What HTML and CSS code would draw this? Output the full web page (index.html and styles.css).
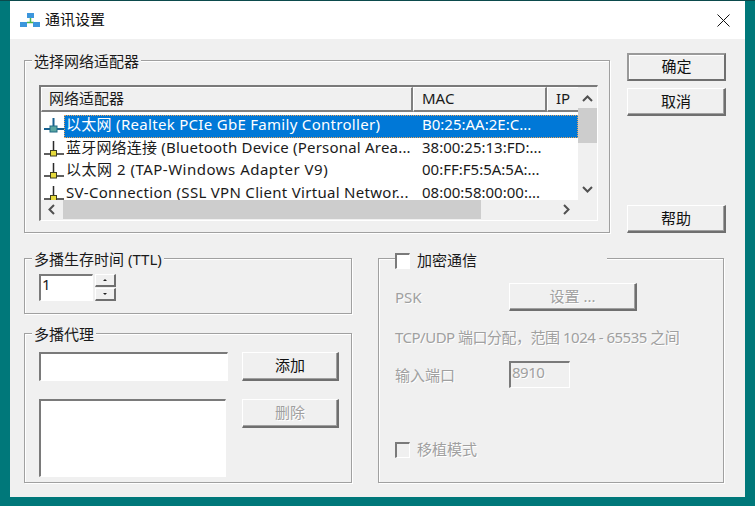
FILE: index.html
```html
<!DOCTYPE html>
<html lang="zh-CN">
<head>
<meta charset="utf-8">
<title>通讯设置</title>
<link rel="stylesheet" href="styles.css">
</head>
<body>
<svg class="defs" width="0" height="0">
  <symbol id="adapter" viewBox="0 0 20 16">
    <path d="M9.500 0v13M0 13h20" stroke="#2b2b2b" stroke-width="1.500" fill="none"/>
    <rect x="6.500" y="9.500" width="6" height="5.500" fill="#e6da3c" stroke="#3f3f20"/>
  </symbol>
  <symbol id="adapter-sel" viewBox="0 0 20 16">
    <path d="M9.500 0v13M0 11h20" stroke="#17608f" stroke-width="2" fill="none"/>
    <rect x="6" y="8" width="7" height="6" fill="#5aa6a0" stroke="#1f6a86"/>
  </symbol>
</svg>
<main class="window">
  <header class="titlebar">
    <svg class="title-icon" width="20" height="14" viewBox="0 0 20 14">
      <rect x="7" y="0" width="7" height="5" fill="#3c96dc"/>
      <path d="M10.500 5v4M7 9.500h7" stroke="#4fb848" stroke-width="1.500" fill="none"/>
      <rect x="0" y="9" width="7" height="5" fill="#3c96dc"/>
      <rect x="13" y="9" width="7" height="5" fill="#3c96dc"/>
    </svg>
    <span class="title-text">通讯设置</span>
    <svg class="close" width="13" height="13" viewBox="0 0 13 13">
      <path d="M.5.5l12 12M12.500.5l-12 12" stroke="#111" stroke-width="1" fill="none"/>
    </svg>
  </header>
  <div class="content">
    <div class="top-row">
      <section class="group adapters">
        <h2 class="legend">选择网络适配器</h2>
        <div class="listview">
          <div class="lv-main">
            <div class="lv-header">
              <div class="hcell hname">网络适配器</div>
              <div class="hcell hmac">MAC</div>
              <div class="hcell hip">IP</div>
            </div>
            <div class="lv-rows">
              <div class="row">
                <svg class="row-icon"><use href="#adapter-sel"/></svg>
                <div class="row-text selected"><span class="cname">以太网 (Realtek PCIe GbE Family Controller)</span><span class="cmac">B0:25:AA:2E:C...</span></div>
              </div>
              <div class="row">
                <svg class="row-icon"><use href="#adapter"/></svg>
                <div class="row-text"><span class="cname tight">蓝牙网络连接 (Bluetooth Device (Personal Area...</span><span class="cmac">38:00:25:13:FD:...</span></div>
              </div>
              <div class="row">
                <svg class="row-icon"><use href="#adapter"/></svg>
                <div class="row-text"><span class="cname wide">以太网 2 (TAP-Windows Adapter V9)</span><span class="cmac">00:FF:F5:5A:5A:...</span></div>
              </div>
              <div class="row">
                <svg class="row-icon"><use href="#adapter"/></svg>
                <div class="row-text"><span class="cname">SV-Connection (SSL VPN Client Virtual Networ...</span><span class="cmac">08:00:58:00:00:...</span></div>
              </div>
            </div>
          </div>
          <div class="vscroll">
            <svg class="chev up" width="11" height="7" viewBox="0 0 11 7"><path d="M1 6l4.500-4.500L10 6" stroke="#505050" stroke-width="2" fill="none"/></svg>
            <div class="vthumb"></div>
            <svg class="chev down" width="11" height="7" viewBox="0 0 11 7"><path d="M1 1l4.500 4.500L10 1" stroke="#505050" stroke-width="2" fill="none"/></svg>
          </div>
          <div class="hscroll">
            <svg class="chev" width="7" height="11" viewBox="0 0 7 11"><path d="M6 1L1.500 5.500 6 10" stroke="#505050" stroke-width="2" fill="none"/></svg>
            <div class="hthumb"></div>
            <svg class="chev" width="7" height="11" viewBox="0 0 7 11"><path d="M1 1l4.500 4.500L1 10" stroke="#505050" stroke-width="2" fill="none"/></svg>
          </div>
        </div>
      </section>
      <div class="actions">
        <button class="btn default" type="button">确定</button>
        <button class="btn" type="button">取消</button>
        <button class="btn help" type="button">帮助</button>
      </div>
    </div>
    <div class="bottom-row">
      <div class="left-col">
        <section class="group ttl">
          <h2 class="legend">多播生存时间 (TTL)</h2>
          <div class="spin-row">
            <div class="field spin-input">1</div>
            <div class="spin">
              <div class="spin-btn"><i class="tri-up"></i></div>
              <div class="spin-btn"><i class="tri-down"></i></div>
            </div>
          </div>
        </section>
        <section class="group proxy">
          <h2 class="legend">多播代理</h2>
          <div class="proxy-row">
            <div class="field proxy-input"></div>
            <button class="btn small" type="button">添加</button>
          </div>
          <div class="proxy-row second">
            <div class="field proxy-list"></div>
            <button class="btn small disabled" type="button">删除</button>
          </div>
        </section>
      </div>
      <section class="group secure">
        <div class="legend check-legend">
          <span class="checkbox"></span>
          <span class="check-label">加密通信</span>
        </div>
        <div class="form-row">
          <span class="form-label muted">PSK</span>
          <button class="btn setup disabled" type="button">设置 ...</button>
        </div>
        <p class="range muted">TCP/UDP 端口分配，范围 1024 - 65535 之间</p>
        <div class="form-row port-row">
          <span class="form-label muted">输入端口</span>
          <div class="field port muted">8910</div>
        </div>
        <div class="check-row">
          <span class="checkbox off"></span>
          <span class="check-label muted">移植模式</span>
        </div>
      </section>
    </div>
  </div>
</main>
</body>
</html>
```
FILE: styles.css
```css
* { box-sizing: border-box; }
html, body { margin: 0; padding: 0; }
body {
  width: 755px;
  height: 506px;
  background: #00787a;
  padding: 0 10px;
  overflow: hidden;
  font: 15px/20px "Noto Sans", "Noto Sans CJK SC", sans-serif;
  color: #1a1a1a;
  border-top: 1px solid #0b4a4c;
}
.defs { position: absolute; }
.window { width: 735px; height: 496px; background: #f0f0f0; }
.titlebar {
  height: 38px;
  background: #fff;
  display: flex;
  align-items: center;
  padding: 0 15px 0 10px;
}
.title-icon { margin-right: 5px; }
.title-text { flex: 1; color: #111; margin-top: -2px; }
.content { padding: 14px 0 0 14px; }
.top-row { display: flex; height: 180px; }
.group {
  position: relative;
  border: 1px solid #a0a0a0;
  box-shadow: inset 1px 1px 0 #fff, 1px 1px 0 #fff;
}
.legend {
  position: absolute;
  left: 7px;
  top: -10px;
  margin: 0;
  padding: 0 2px;
  background: #f0f0f0;
  font: inherit;
}
.adapters { width: 586px; height: 173px; margin-top: 7px; padding: 24px 0 0 14px; }
.listview {
  width: 559px;
  height: 136px;
  border-style: solid;
  border-width: 2px 1px 1px 2px;
  border-color: #7a7a7a #fff #fff #7a7a7a;
  display: grid;
  grid-template-columns: 537px 19px;
  grid-template-rows: 113px 19px;
  background: #f0f0f0;
}
.lv-main { background: #fff; overflow: hidden; }
.lv-header { display: flex; height: 25px; background: #f0f0f0; }
.hcell {
  height: 25px;
  padding: 0 0 0 7px;
  border-style: solid;
  border-width: 1px 2px 2px 1px;
  border-color: #fff #7f7f7f #7f7f7f #fff;
  line-height: 20px;
}
.hname { width: 372px; }
.hmac { width: 134px; padding-left: 8px; }
.hip { width: 31px; padding-left: 8px; border-right-width: 0; }
.lv-rows { padding: 3px 0 0 3px; }
.row { display: flex; height: 22.5px; align-items: center; }
.row-icon { width: 20px; height: 16px; flex: none; }
.row-text {
  display: flex;
  flex: 1;
  height: 22.5px;
  line-height: 17px;
  white-space: nowrap;
  border: 1px solid transparent;
}
.row-text.selected {
  background: #0078d7;
  color: #fff;
  border: 1px dotted #e9a45c;
}
.cname { width: 357px; padding-left: 1px; flex: none; letter-spacing: .3px; white-space: nowrap; }
.cname.tight { letter-spacing: .2px; }
.cname.wide { letter-spacing: .5px; }
.vscroll {
  display: flex;
  flex-direction: column;
  align-items: center;
  background: #f0f0f0;
}
.chev { flex: none; }
.vscroll .up { margin-top: 8px; }
.vthumb { width: 19px; height: 35px; margin-top: 6px; background: #cdcdcd; }
.vscroll .down { margin-top: 43px; }
.hscroll {
  grid-column: 1;
  display: flex;
  align-items: center;
  height: 19px;
  padding: 0 7px;
  background: #f0f0f0;
}
.hthumb { width: 418px; height: 19px; margin-left: 8px; margin-right: 82px; background: #cdcdcd; }
.actions { display: flex; flex-direction: column; margin-left: 17px; width: 99px; }
.btn {
  display: block;
  padding: 0 0 2px;
  width: 99px;
  height: 28px;
  background: #f0f0f0;
  color: #111;
  font: inherit;
  border-style: solid;
  border-width: 1px 2px 2px 1px;
  border-color: #fff #6f6f6f #6f6f6f #fff;
  box-shadow: inset -1px -1px 0 #a0a0a0;
}
.actions .btn + .btn { margin-top: 7px; }
.btn.default { border: 2px solid #6f6f6f; border-top-color: #9a9a9a; border-left-color: #9a9a9a; box-shadow: inset 1px 1px 0 #fff; }
.actions .help { margin-top: auto !important; }
.bottom-row { display: flex; margin-top: 25px; }
.left-col { width: 328px; }
.ttl { height: 56px; padding: 15px 0 0 14px; }
.spin-row { display: flex; }
.field {
  background: #fff;
  border-style: solid;
  border-width: 2px 1px 1px 2px;
  border-color: #7a7a7a #fff #fff #7a7a7a;
}
.spin-input { width: 54px; height: 27px; padding: 0 0 0 1px; line-height: 17px; }
.spin { margin-left: 2px; display: flex; flex-direction: column; gap: 1px; }
.spin-btn {
  width: 21px;
  height: 13px;
  display: flex;
  align-items: center;
  justify-content: center;
  border-style: solid;
  border-width: 1px 2px 2px 1px;
  border-color: #fff #6f6f6f #6f6f6f #fff;
}
.tri-up, .tri-down { width: 0; height: 0; border-left: 2px solid transparent; border-right: 2px solid transparent; }
.tri-up { border-bottom: 2px solid #222; }
.tri-down { border-top: 2px solid #222; }
.proxy { height: 150px; margin-top: 19px; padding: 18px 0 0 14px; }
.proxy-row { display: flex; }
.proxy-row.second { margin-top: 18px; }
.proxy-input { width: 189px; height: 29px; margin-right: 14px; }
.proxy-list { width: 187px; height: 78px; margin-right: 16px; }
.small { width: 97px; height: 29px; }
.btn.disabled { color: #a0a0a0; text-shadow: 1px 1px 0 #fff; }
.muted { color: #a0a0a0; text-shadow: 1px 1px 0 #fff; }
.secure { width: 346px; height: 225px; margin-left: 26px; padding: 24px 0 0 16px; }
.check-legend {
  left: 16px;
  top: -7px;
  width: 212px;
  height: 18px;
  padding: 0;
  display: flex;
  align-items: center;
}
.checkbox {
  flex: none;
  display: block;
  width: 15px;
  height: 16px;
  background: #fff;
  border-style: solid;
  border-width: 2px 1px 1px 2px;
  border-color: #7a7a7a #fff #fff #7a7a7a;
}
.checkbox.off { background: #f0f0f0; }
.check-label { margin-left: 7px; margin-top: -2px; }
.form-row { display: flex; align-items: center; }
.form-label { width: 114px; flex: none; }
.setup { width: 128px; height: 28px; }
.range { margin: 16px 0 0; height: 20px; white-space: nowrap; letter-spacing: -.5px; }
.port-row { margin-top: 14px; }
.port { width: 61px; height: 27px; padding-left: 1px; background: #f0f0f0; line-height: 19px; letter-spacing: -.5px; }
.check-row { display: flex; align-items: center; margin-top: 53px; }
```
